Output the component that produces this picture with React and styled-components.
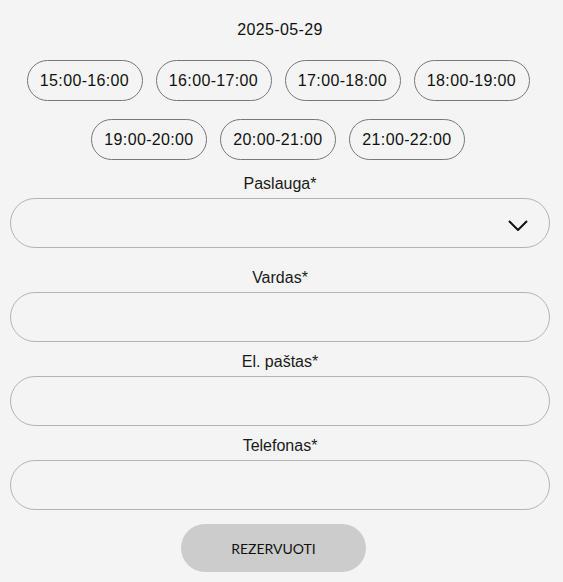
import React, { useState } from 'react';
import styled, { createGlobalStyle } from 'styled-components';

const GlobalStyle = createGlobalStyle`
  html, body {
    margin: 0;
    padding: 0;
    background: #f4f4f4;
  }
  body {
    font-family: "Liberation Sans", Arial, sans-serif;
    color: #111;
  }
`;

const slots = [
  '15:00-16:00',
  '16:00-17:00',
  '17:00-18:00',
  '18:00-19:00',
  '19:00-20:00',
  '20:00-21:00',
  '21:00-22:00',
];

const fields = [
  { name: 'name', label: 'Vardas*', type: 'text' },
  { name: 'email', label: 'El. paštas*', type: 'email' },
  { name: 'phone', label: 'Telefonas*', type: 'tel' },
];

const App = () => {
  const [selected, setSelected] = useState(null);

  return (
    <>
      <GlobalStyle />
      <Form onSubmit={e => e.preventDefault()}>
        <DateTitle>2025-05-29</DateTitle>

        <Slots>
          {slots.map(slot => (
            <SlotButton
              key={slot}
              type="button"
              $active={selected === slot}
              onClick={() => setSelected(slot)}
            >
              {slot}
            </SlotButton>
          ))}
        </Slots>

        <Field $spaced>
          <Label>Paslauga*</Label>
          <SelectWrap>
            <Select defaultValue="">
              <option value="" disabled hidden></option>
            </Select>
            <Chevron viewBox="0 0 20 11" aria-hidden="true">
              <polyline points="1,1 10,10 19,1" />
            </Chevron>
          </SelectWrap>
        </Field>

        {fields.map(field => (
          <Field key={field.name}>
            <Label>{field.label}</Label>
            <Input type={field.type} name={field.name} />
          </Field>
        ))}

        <Actions>
          <SubmitButton type="submit">REZERVUOTI</SubmitButton>
        </Actions>
      </Form>
    </>
  );
};

const Form = styled.form`
  width: 540px;
  padding: 21px 0 10px 10px;
  display: flex;
  flex-direction: column;
  align-items: stretch;
`;

const DateTitle = styled.div`
  font-size: 16px;
  line-height: 18px;
  letter-spacing: 0.35px;
  text-align: center;
  margin-bottom: 21px;
`;

const Slots = styled.div`
  display: flex;
  flex-wrap: wrap;
  justify-content: center;
  column-gap: 13px;
  row-gap: 18px;
  padding-right: 4px;
  margin-bottom: 15px;
`;

const SlotButton = styled.button`
  width: 116px;
  height: 41px;
  padding: 0;
  border: 1px solid #777;
  border-radius: 21px;
  background: ${props => props.$active ? '#ccc' : 'transparent'};
  font-family: "Liberation Sans", Arial, sans-serif;
  font-size: 16px;
  letter-spacing: 0.35px;
  color: #111;
  cursor: pointer;
`;

const Field = styled.div`
  display: flex;
  flex-direction: column;
  margin-bottom: ${props => props.$spaced ? '21px' : '11px'};
`;

const Label = styled.label`
  font-size: 16px;
  line-height: 18px;
  text-align: center;
  color: #1a1a1a;
  margin-bottom: 5px;
`;

const Input = styled.input`
  box-sizing: border-box;
  width: 100%;
  height: 50px;
  padding: 0 24px;
  border: 1px solid #b3b3b3;
  border-radius: 25px;
  background: transparent;
  font-family: "Liberation Sans", Arial, sans-serif;
  font-size: 16px;
  outline: none;
`;

const SelectWrap = styled.div`
  position: relative;
`;

const Select = styled.select`
  box-sizing: border-box;
  width: 100%;
  height: 50px;
  padding: 0 24px;
  border: 1px solid #b3b3b3;
  border-radius: 25px;
  background: transparent;
  appearance: none;
  font-family: "Liberation Sans", Arial, sans-serif;
  font-size: 16px;
  outline: none;
`;

const Chevron = styled.svg`
  position: absolute;
  right: 22px;
  top: 22px;
  width: 20px;
  height: 11px;
  fill: none;
  stroke: #111;
  stroke-width: 2;
  pointer-events: none;
`;

const Actions = styled.div`
  display: flex;
  justify-content: center;
  padding-top: 3px;
  padding-right: 13px;
`;

const SubmitButton = styled.button`
  width: 185px;
  height: 48px;
  border: 0;
  border-radius: 24px;
  background: #cccccc;
  font-family: Lato, "Liberation Sans", sans-serif;
  font-size: 14px;
  color: #111;
  cursor: pointer;
`;

export default App;
